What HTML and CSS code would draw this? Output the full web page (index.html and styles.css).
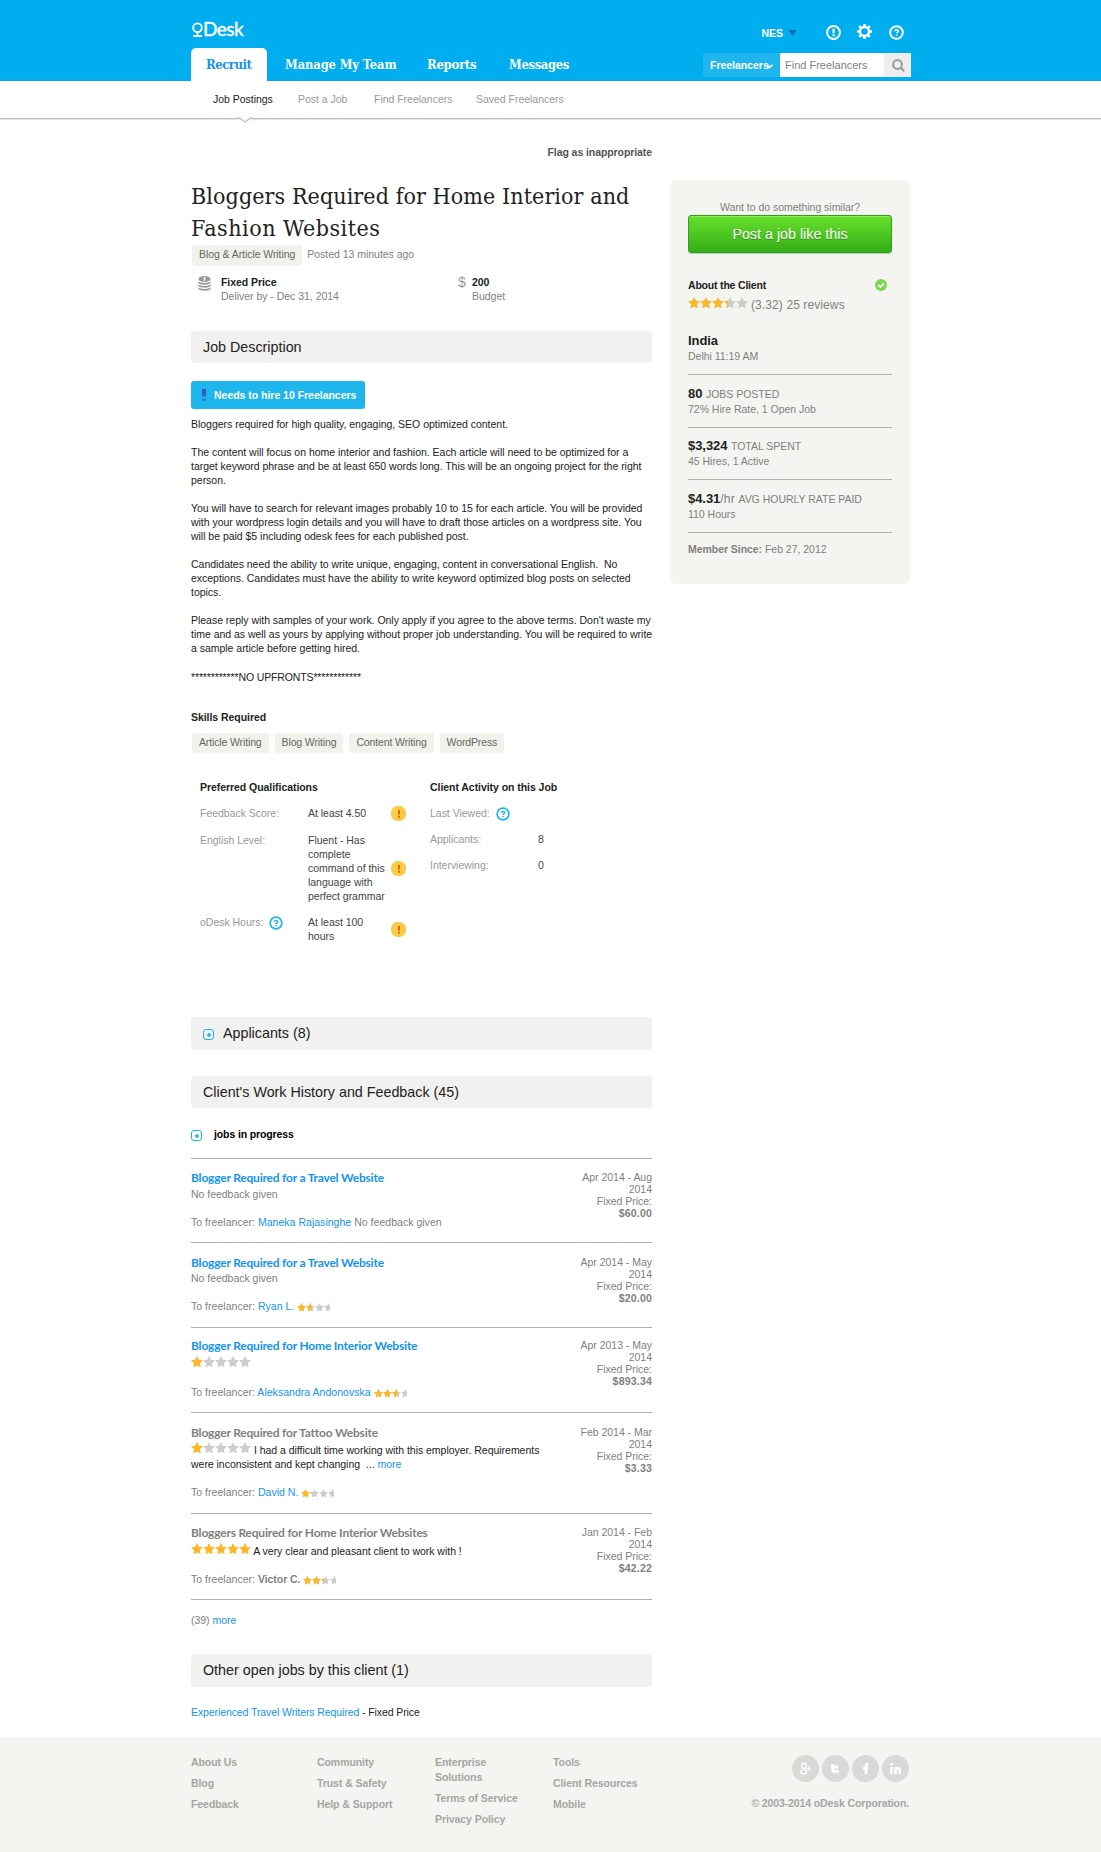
FILE: index.html
```html
<!DOCTYPE html>
<html lang="en">
<head>
<meta charset="utf-8">
<title>Bloggers Required for Home Interior and Fashion Websites - oDesk</title>
<link rel="stylesheet" href="styles.css">
</head>
<body>
<svg class="defs" width="0" height="0" aria-hidden="true">
  <defs>
    <path id="star" d="M6 0l1.800 3.700 4.100.6-3 2.900.7 4.100L6 9.400l-3.600 1.900.7-4.100-3-2.900 4.100-.6z"/>
    <g id="stars"><use href="#star"/><use href="#star" x="12"/><use href="#star" x="24"/><use href="#star" x="36"/><use href="#star" x="48"/></g>
    <symbol id="help" viewBox="0 0 15 15"><circle cx="7.5" cy="7.5" r="6.3" fill="none" stroke="currentColor" stroke-width="1.9"/><path d="M5.900 6.200c0-2 3.300-2 3.300 0 0 1.200-1.600 1.200-1.600 2.400M7.600 9.700v1.300" fill="none" stroke="currentColor" stroke-width="1.600"/></symbol>
    <symbol id="warn" viewBox="0 0 15 15"><rect width="15" height="15" rx="6.5" fill="#facb46"/><path d="M7 4h2v4.600H7zM7 9.800h2v1.900H7z" fill="#db6a0c"/></symbol>
    <symbol id="expand" viewBox="0 0 11 11"><rect x=".5" y=".5" width="10" height="10" rx="2.5" fill="none" stroke="#1fb3ec"/><path d="M5.200 4h1.600v1.200H8v1.600H6.800V8H5.200V6.800H4V5.200h1.200z" fill="#1fb3ec"/></symbol>
  </defs>
</svg>

<header class="top">
  <div class="wrap">
    <div class="brandrow">
      <a class="logo"><svg width="11" height="16" viewBox="0 0 11 16"><circle cx="5.500" cy="5.700" r="4.300" fill="none" stroke="#fff" stroke-width="1.900"/><path d="M1 14h9M5.500 10v4" stroke="#fff" stroke-width="1.800"/></svg><span>Desk</span></a>
      <div class="tools">
        <b>NES</b>
        <svg class="caret" width="9" height="6" viewBox="0 0 9 6"><path d="M0 0h9L4.500 6z" fill="#0072bc"/></svg>
        <svg class="alert" width="15" height="15" viewBox="0 0 15 15"><circle cx="7.500" cy="7.500" r="6.400" fill="none" stroke="#fff" stroke-width="2"/><path d="M6.500 3.700h2.200v4.500H6.500zM6.500 9.200h2.200v2H6.500z" fill="#fff"/></svg>
        <svg class="gear" width="15" height="15" viewBox="0 0 15 15"><circle cx="7.500" cy="7.500" r="4.500" fill="none" stroke="#fff" stroke-width="2.400"/><path d="M7.500 0v3M7.500 12v3M0 7.500h3M12 7.500h3M2.200 2.200l2 2M10.800 10.800l2 2M2.200 12.800l2-2M10.800 4.200l2-2" stroke="#fff" stroke-width="2.600"/></svg>
        <svg class="helpicon" width="15" height="15"><use href="#help"/></svg>
      </div>
    </div>
    <div class="navrow">
      <nav class="tabs"><a class="on">Recruit</a><a class="t2">Manage My Team</a><a class="t3">Reports</a><a class="t4">Messages</a></nav>
      <div class="search">
        <div class="scope"><span>Freelancers</span><svg width="6" height="5" viewBox="0 0 6 5"><path d="M.5 1l1.800 2.500L5.500.8" fill="none" stroke="#fff" stroke-width="1.600"/></svg></div>
        <div class="field">Find Freelancers</div>
        <div class="go"><svg width="13" height="13" viewBox="0 0 13 13"><circle cx="5.500" cy="5.500" r="4.400" fill="none" stroke="#999" stroke-width="2"/><path d="M8.700 8.700l3.500 3.500" stroke="#999" stroke-width="2"/></svg></div>
      </div>
    </div>
  </div>
</header>
<div class="subnav">
  <div class="wrap sublinks">
    <a class="on">Job Postings<svg class="notch" width="14" height="7" viewBox="0 0 14 7"><path d="M0 0h14v1.500L7 5.500 0 1.500z" fill="#fff"/><path d="M0 .7h1L7 5l6-4.300h1" fill="none" stroke="#bfbfbf" stroke-width="1.300"/></svg></a><a class="s2">Post a Job</a><a class="s3">Find Freelancers</a><a class="s4">Saved Freelancers</a>
  </div>
</div>

<div class="wrap columns">
  <main>
    <div class="flag">Flag as inappropriate</div>
    <h1>Bloggers Required for Home Interior and<br><span>Fashion Websites</span></h1>
    <div class="meta"><span class="tag tall">Blog &amp; Article Writing</span><span>Posted 13 minutes ago</span></div>
    <div class="terms">
      <svg class="coins" width="13" height="15" viewBox="0 0 13 15"><g fill="#999"><ellipse cx="6.500" cy="3" rx="6.200" ry="2.900"/><path d="M.3 5.200c2 2.300 10.400 2.300 12.400 0v1.600c-1 2.500-11.400 2.500-12.400 0zM.3 8.200c2 2.300 10.400 2.300 12.400 0v1.600c-1 2.500-11.400 2.500-12.400 0zM.3 11.200c2 2.300 10.400 2.300 12.400 0v1.400c-1 3-11.400 3-12.400 0z"/></g><path d="M7.800 1.700c-2-.7-2.500.8-1.200 1.200s.9 1.900-1.300 1.200M6.500 1v4" fill="none" stroke="#fff" stroke-width=".8"/></svg>
      <div class="term"><b>Fixed Price</b><br>Deliver by - Dec 31, 2014</div>
      <span class="dollar">$</span>
      <div><b>200</b><br>Budget</div>
    </div>
    <h2 class="bar">Job Description</h2>
    <div class="hire"><svg width="4" height="12" viewBox="0 0 4 12"><path d="M0 0h4v6.500H3.600v1H.4v-1H0zM.5 10h3v1.800h-3z" fill="#2d5fc4"/></svg>Needs to hire 10 Freelancers</div>
    <div class="desc">Bloggers required for high quality, engaging, SEO optimized content.

The content will focus on home interior and fashion. Each article will need to be optimized for a
target keyword phrase and be at least 650 words long. This will be an ongoing project for the right
person.

You will have to search for relevant images probably 10 to 15 for each article. You will be provided
with your wordpress login details and you will have to draft those articles on a wordpress site. You
will be paid $5 including odesk fees for each published post.

Candidates need the ability to write unique, engaging, content in conversational English.&nbsp; No
exceptions. Candidates must have the ability to write keyword optimized blog posts on selected
topics.

Please reply with samples of your work. Only apply if you agree to the above terms. Don't waste my
time and as well as yours by applying without proper job understanding. You will be required to write
a sample article before getting hired.</div>
    <div class="desc caution">************NO UPFRONTS************</div>
    <h3 class="skills">Skills Required</h3>
    <div class="tags"><span class="tag">Article Writing</span><span class="tag">Blog Writing</span><span class="tag">Content Writing</span><span class="tag">WordPress</span></div>
    <div class="facts">
      <section class="quals">
        <h3>Preferred Qualifications</h3>
        <div class="row"><span class="k">Feedback Score:</span><span class="v">At least 4.50</span><svg width="15" height="15"><use href="#warn"/></svg></div>
        <div class="row"><span class="k">English Level:</span><span class="v">Fluent - Has<br>complete<br>command of this<br>language with<br>perfect grammar</span><svg width="15" height="15"><use href="#warn"/></svg></div>
        <div class="row"><span class="k">oDesk Hours:<svg class="q" width="14" height="14"><use href="#help"/></svg></span><span class="v">At least 100<br>hours</span><svg width="15" height="15"><use href="#warn"/></svg></div>
      </section>
      <section class="activity">
        <h3>Client Activity on this Job</h3>
        <div class="row"><span class="k">Last Viewed:<svg class="q" width="14" height="14"><use href="#help"/></svg></span></div>
        <div class="row"><span class="k">Applicants:</span><span class="v">8</span></div>
        <div class="row"><span class="k">Interviewing:</span><span class="v">0</span></div>
      </section>
    </div>
    <h2 class="bar applicants"><svg width="11" height="11"><use href="#expand"/></svg>Applicants (8)</h2>
    <h2 class="bar history">Client's Work History and Feedback (45)</h2>
    <div class="progress"><svg width="11" height="11"><use href="#expand"/></svg>jobs in progress</div>

    <article class="job j1">
      <div class="body">
        <h4><a>Blogger Required for a Travel Website</a></h4>
        <p>No feedback given</p>
        <p class="to">To freelancer: <a>Maneka Rajasinghe</a> No feedback given</p>
      </div>
      <div class="when">Apr 2014 - Aug<br>2014<br>Fixed Price:<br><b>$60.00</b></div>
    </article>
    <article class="job j2">
      <div class="body">
        <h4><a>Blogger Required for a Travel Website</a></h4>
        <p>No feedback given</p>
        <p class="to">To freelancer: <a>Ryan L.</a> <svg class="mini" viewBox="0 0 44 12"><use href="#stars" fill="#ccc"/><svg width="19.500" height="12"><use href="#stars" fill="#fdb827"/></svg></svg></p>
      </div>
      <div class="when">Apr 2014 - May<br>2014<br>Fixed Price:<br><b>$20.00</b></div>
    </article>
    <article class="job j3">
      <div class="body">
        <h4><a>Blogger Required for Home Interior Website</a></h4>
        <p><svg class="rate" viewBox="0 0 60 12"><use href="#stars" fill="#ccc"/><svg width="12" height="12"><use href="#stars" fill="#fdb827"/></svg></svg></p>
        <p class="to">To freelancer: <a>Aleksandra Andonovska</a> <svg class="mini" viewBox="0 0 44 12"><use href="#stars" fill="#ccc"/><svg width="31" height="12"><use href="#stars" fill="#fdb827"/></svg></svg></p>
      </div>
      <div class="when">Apr 2013 - May<br>2014<br>Fixed Price:<br><b>$893.34</b></div>
    </article>
    <article class="job j4">
      <div class="body">
        <h4>Blogger Required for Tattoo Website</h4>
        <p class="dark"><svg class="rate" viewBox="0 0 60 12"><use href="#stars" fill="#ccc"/><svg width="12" height="12"><use href="#stars" fill="#fdb827"/></svg></svg> I had a difficult time working with this employer. Requirements<br>were inconsistent and kept changing &nbsp;... <a>more</a></p>
        <p class="to">To freelancer: <a>David N.</a> <svg class="mini" viewBox="0 0 44 12"><use href="#stars" fill="#ccc"/><svg width="15" height="12"><use href="#stars" fill="#fdb827"/></svg></svg></p>
      </div>
      <div class="when">Feb 2014 - Mar<br>2014<br>Fixed Price:<br><b>$3.33</b></div>
    </article>
    <article class="job j5">
      <div class="body">
        <h4>Bloggers Required for Home Interior Websites</h4>
        <p class="dark"><svg class="rate" viewBox="0 0 60 12"><use href="#stars" fill="#fdb827"/></svg> A very clear and pleasant client to work with !</p>
        <p class="to">To freelancer: <b>Victor C.</b> <svg class="mini" viewBox="0 0 44 12"><use href="#stars" fill="#ccc"/><svg width="28" height="12"><use href="#stars" fill="#fdb827"/></svg></svg></p>
      </div>
      <div class="when">Jan 2014 - Feb<br>2014<br>Fixed Price:<br><b>$42.22</b></div>
    </article>
    <div class="moreline">(39) <a>more</a></div>
    <h2 class="bar others">Other open jobs by this client (1)</h2>
    <div class="openjob"><a>Experienced Travel Writers Required</a> - Fixed Price</div>
  </main>

  <aside>
    <div class="want">Want to do something similar?</div>
    <a class="post">Post a job like this</a>
    <div class="about"><b>About the Client</b><svg width="12" height="12" viewBox="0 0 12 12"><circle cx="6" cy="6" r="6" fill="#7bd850"/><path d="M3.300 6l2 2L8.900 4.300" fill="none" stroke="#fff" stroke-width="1.700"/></svg></div>
    <div class="score"><svg class="rate" viewBox="0 0 60 12"><use href="#stars" fill="#ccc"/><svg width="40" height="12"><use href="#stars" fill="#fdb827"/></svg></svg><span>(3.32) 25 reviews</span></div>
    <div class="stat place"><div class="big"><b>India</b></div>Delhi 11:19 AM</div>
    <div class="stat"><div class="big"><b>80</b> <small>JOBS POSTED</small></div>72% Hire Rate, 1 Open Job</div>
    <div class="stat spent"><div class="big"><b>$3,324</b> <small>TOTAL SPENT</small></div>45 Hires, 1 Active</div>
    <div class="stat"><div class="big"><b>$4.31</b><i>/hr</i> <small>AVG HOURLY RATE PAID</small></div>110 Hours</div>
    <div class="member"><b>Member Since:</b> Feb 27, 2012</div>
  </aside>
</div>

<footer>
  <div class="wrap foot">
    <div class="c1"><a>About Us</a><a>Blog</a><a>Feedback</a></div>
    <div class="c2"><a>Community</a><a>Trust &amp; Safety</a><a>Help &amp; Support</a></div>
    <div class="c2"><a>Enterprise<br>Solutions</a><a>Terms of Service</a><a>Privacy Policy</a></div>
    <div class="c4"><a>Tools</a><a>Client Resources</a><a>Mobile</a></div>
    <div class="legal">
      <div class="social">
        <svg width="27" height="27" viewBox="0 0 27 27"><circle cx="13.500" cy="13.500" r="13.500" fill="#d9d9d7"/><g fill="none" stroke="#fff" stroke-width="1.300"><ellipse cx="12" cy="10.700" rx="2.200" ry="2.500"/><path d="M15 8.300h-3M12 13.200c-.8.900 2.700 1.500 2.700 3.400 0 3-6 2.800-6 .2 0-1.500 2-2 3.600-2"/><path d="M14.800 13.500h4M16.800 11.500v4" stroke-width="1.100"/></g></svg>
        <svg width="27" height="27" viewBox="0 0 27 27"><circle cx="13.500" cy="13.500" r="13.500" fill="#d9d9d7"/><path d="M10.700 9v5.500q0 2 2.200 2h4M10.700 12h5.500" fill="none" stroke="#fff" stroke-width="3"/></svg>
        <svg width="27" height="27" viewBox="0 0 27 27"><circle cx="13.500" cy="13.500" r="13.500" fill="#d9d9d7"/><path d="M16.500 9.300h-1q-1.600 0-1.600 1.700v8M11 13.200h5.300" fill="none" stroke="#fff" stroke-width="2.500"/></svg>
        <svg width="27" height="27" viewBox="0 0 27 27"><circle cx="13.500" cy="13.500" r="13.500" fill="#d9d9d7"/><path d="M9.400 12v7M9.400 8v2.500M13.500 19v-7M13.500 15c0-2.500 4.200-2.500 4.200 0v4" fill="none" stroke="#fff" stroke-width="2.500"/></svg>
      </div>
      <div class="copy">© 2003-2014 oDesk Corporation.</div>
    </div>
  </div>
</footer>
</body>
</html>
```

FILE: styles.css
```css
* { box-sizing: border-box; }
body { margin: 0; background: #fff; color: #7f7f7f; font: 10.520px/14px "Liberation Sans", Arial, sans-serif; letter-spacing: -.03px; white-space: nowrap; }
h1, h2, h3, h4, p { margin: 0; }
svg { display: block; flex: none; }
.defs { position: absolute; }
.wrap { width: 720px; margin-left: 191px; }

.top { height: 81px; background: #00aeef; color: #fff; }
.brandrow { height: 48px; display: flex; justify-content: space-between; }
.logo { display: flex; align-items: flex-start; padding: 22px 0 0 1px; }
.logo span { font: 400 19px/20px Lato, sans-serif; letter-spacing: -.5px; margin-top: -3px; -webkit-text-stroke: .4px #fff; }
.tools { display: flex; align-items: flex-start; padding-right: 7px; }
.tools b { margin-top: 26px; color: #fff; }
.caret { margin: 30px 29px 0 5px; }
.alert { margin: 25px 16px 0 0; }
.gear { margin: 24px 17px 0 0; }
.helpicon { margin-top: 25px; }
.navrow { display: flex; justify-content: space-between; height: 33px; }
.tabs { display: flex; font: 700 13px/34px "DejaVu Serif Condensed", "DejaVu Serif", serif; letter-spacing: -.3px; }
.tabs a { height: 33px; }
.tabs .on { width: 76px; padding-left: 15px; background: #fff; color: #1494f0; border-radius: 5px 5px 0 0; letter-spacing: -.5px; }
.t2 { margin-left: 18px; width: 142px; }
.t3 { width: 82px; }
.t2 { letter-spacing: -.1px; }
.t4, .t2 { font-size: 12.800px; }
.search { display: flex; margin-top: 5px; height: 24px; line-height: 24px; }
.scope { width: 77px; background: #1fb6ee; padding-left: 7px; display: flex; font-weight: 700; border-radius: 2px 0 0 2px; }
.scope svg { margin: 11px 0 0 -2px; }
.field { width: 104px; background: #fff; color: #7f7f7f; padding-left: 5px; font-size: 11px; letter-spacing: 0; }
.go { width: 27px; background: #eee; padding: 6px 0 0 8px; }

.subnav { height: 38px; border-bottom: 1px solid #bfbfbf; box-shadow: 0 1px 1px #e6e6e6; color: #999; line-height: 36px; }
.sublinks { display: flex; padding-left: 22px; }
.sublinks .on { color: #222; width: 85px; position: relative; }
.notch { position: absolute; left: 25px; top: 36px; }
.s2 { width: 76px; }
.s3 { width: 102px; }

.columns { display: flex; justify-content: space-between; height: 1618px; }
a { color: #1494f0; }
header a, .sublinks a, footer a { color: inherit; }
main { width: 461px; }
b, h3 { color: #222; letter-spacing: -.06px; }
.flag { margin-top: 26px; text-align: right; color: #555; font-weight: 700; letter-spacing: -.09px; }
h1 { margin-top: 21px; font: 400 23px/32px "DejaVu Serif Condensed", "DejaVu Serif", serif; color: #222; letter-spacing: .09px; }
h1 span { letter-spacing: .5px; }
.meta { display: flex; gap: 5px; margin-top: 1px; padding-left: 1px; line-height: 19px; }
.tag { background: #f1f2ec; color: #666; border-radius: 3px; height: 20px; padding: 0 7px; line-height: 19px; letter-spacing: -.14px; }
.tall { height: 21px; letter-spacing: -.08px; }
.terms { display: flex; margin-top: 9px; height: 28px; }
.coins { margin: 1px 10px 0 7px; }
.term { flex: none; width: 237px; }
.dollar { width: 14px; font: 14px/14px "Liberation Sans", sans-serif; color: #999; }
.bar { height: 32px; margin-top: 28px; padding-left: 12px; background: #f1f1ef; border-radius: 4px; font-weight: 400; font-size: 14.300px; line-height: 32px; letter-spacing: 0; color: #222; display: flex; }
.hire { display: flex; width: 174px; height: 28px; margin-top: 18px; padding-left: 11px; gap: 8px; background: #1fb6ee; border-radius: 3px; color: #fff; font-weight: 700; line-height: 28px; }
.hire svg { margin-top: 8px; }
.desc { margin-top: 8px; white-space: pre; color: #222; }
.caution { margin-top: 15px; letter-spacing: -.14px; }
h3 { font-size: 10.520px; line-height: 14px; }
.skills { margin-top: 26px; }
.tags { display: flex; gap: 6px; margin-top: 9px; padding-left: 1px; }
.facts { display: flex; margin: 27px 0 0 9px; height: 237px; }
.quals { width: 230px; }
.row { display: flex; margin-top: 12px; }
.k { width: 108px; display: flex; color: #999; }
.v { width: 83px; color: #444; }
.row > svg { align-self: center; }
.q { color: #1fb6ee; margin: 1px 0 0 6px; }
.activity .row { height: 14px; }
.applicants { margin-top: 0; height: 33px; }
.applicants svg { margin: 12px 9px 0 0; }
.history { margin-top: 26px; }
.progress { display: flex; gap: 12px; height: 31px; margin-top: 19px; color: #000; font-weight: 700; letter-spacing: -.13px; }
.progress svg { margin-top: 3px; }

.job { display: flex; justify-content: space-between; border-top: 1px solid #b0b0b0; }
.job h4 { font: 700 12px/14px Lato, sans-serif; color: #7f7f7f; letter-spacing: -.2px; }
.job p { height: 14px; margin-top: 2px; }
.job .to { height: 14px; margin-top: 14px; letter-spacing: .02px; }
.job b { color: #7f7f7f; }
.when b { letter-spacing: .2px; }
.job .dark { color: #222; height: auto; }
.when { text-align: right; line-height: 12px; }
.rate { display: inline-block; width: 60px; height: 12px; vertical-align: -1px; }
.mini { display: inline-block; width: 33px; height: 9px; vertical-align: -2px; }
.j1 { height: 84px; padding-top: 12px; }
.j2 { height: 85px; padding-top: 13px; }
.j2 p:nth-child(2) { margin-top: 1px; }
.j3 { height: 85px; padding-top: 11px; }
.j3 p:nth-child(2) { margin-top: 3px; }
.j3 .to { margin-top: 15px; }
.j4 { height: 101px; padding-top: 13px; }
.j4 .dark { margin-top: 3px; }
.j5 { height: 87px; padding-top: 12px; border-bottom: 1px solid #b0b0b0; }
.j5 .dark { margin-top: 4px; }
.dark .rate { vertical-align: 0; margin-top: -1px; }
.moreline { margin-top: 13px; }
.others { height: 33px; margin-top: 27px; }
.openjob { margin-top: 18px; color: #222; letter-spacing: -.1px; }

aside { width: 240px; height: 404px; margin: 61px 1px 0 0; padding: 20px 18px; background: #f4f5f1; border-radius: 5px; }
.want { text-align: center; }
.post { display: block; height: 38px; margin-top: 1px; border: 1px solid #33a01a; border-radius: 3px; background: linear-gradient(#68e02c, #35ad17); box-shadow: inset 0 1px #8bed52, 0 1px 1px #a9cfae; color: #fff; font-size: 14.300px; line-height: 37px; letter-spacing: 0; text-align: center; text-shadow: 0 1px #2f951a; }
.about { display: flex; justify-content: space-between; margin-top: 25px; padding-right: 5px; }
.about b { letter-spacing: -.2px; }
.about svg { margin-top: 1px; }
.score { display: flex; gap: 3px; font-size: 12px; line-height: 16px; letter-spacing: .1px; margin-top: 5px; margin-bottom: -1px; }
.stat { padding-bottom: 11px; border-bottom: 1px solid #b0b0b0; margin-top: 11px; }
.big { height: 16px; line-height: 16px; font-size: 13px; }
.big small { font-size: 10.520px; }
.big i { font-style: normal; font-size: 12px; letter-spacing: .2px; }
.place { margin-top: 21px; }
.spent { margin-top: 10px; }
.member { margin-top: 9px; }
.member b { color: #7f7f7f; }

footer { height: 115px; background: #f4f5f1; color: #a5a5a3; font-weight: 700; line-height: 15px; letter-spacing: -.08px; }
.foot { display: flex; padding-top: 18px; }
.foot a { display: block; margin-bottom: 6px; }
.c1 { width: 126px; }
.c2 { width: 118px; }
.c4 { flex: 1; }
.social { display: flex; gap: 3px; justify-content: flex-end; padding-right: 2px; }
.copy { margin-top: 14px; padding-right: 2px; letter-spacing: -.13px; }
```
